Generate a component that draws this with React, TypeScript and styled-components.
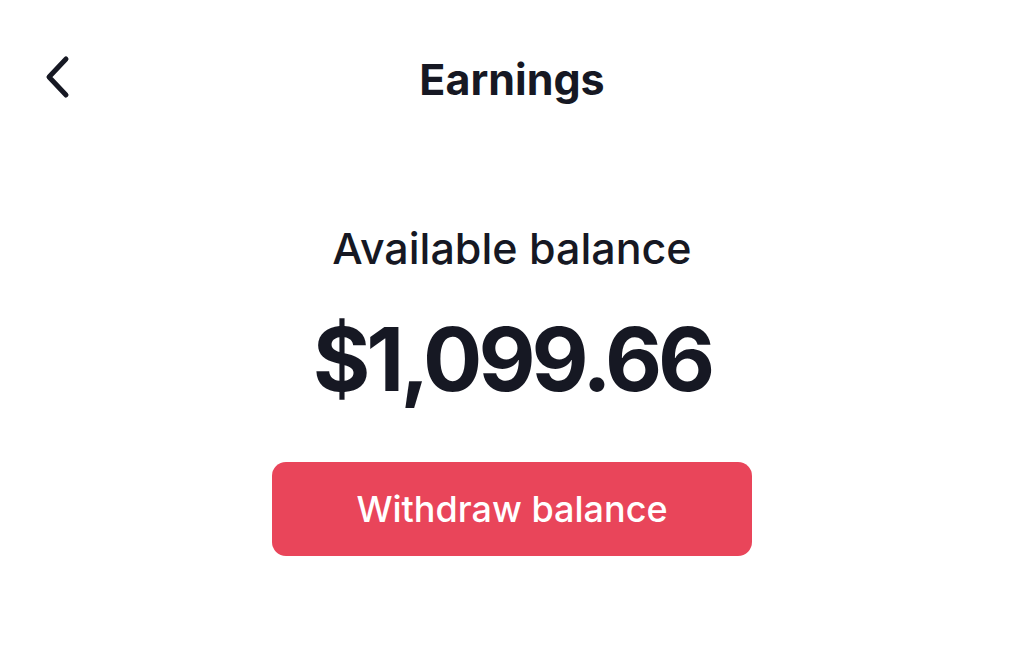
import styled, { createGlobalStyle } from "styled-components";

const GlobalStyle = createGlobalStyle`
    html, body {
        margin: 0;
        padding: 0;
        background: #FFFFFF;
    }
    body {
        font-family: "Inter", "Noto Sans", sans-serif;
        color: #161823;
    }
`

const App = () => {
    return (
        <>
            <GlobalStyle/>
            <StyledPage>
                <StyledHeader>
                    <StyledBackBtn aria-label="Back">
                        <StyledBackIcon viewBox="0 0 28 44" fill="none">
                            <path d="M22 4 L5 22 L22 40" stroke="#161823" strokeWidth="5"
                                  strokeLinecap="round" strokeLinejoin="round"/>
                        </StyledBackIcon>
                    </StyledBackBtn>
                    <StyledTitle>Earnings</StyledTitle>
                </StyledHeader>

                <StyledBalanceArea>
                    <StyledBalanceLabel>Available balance</StyledBalanceLabel>
                    <StyledBalanceAmount>$1,099.66</StyledBalanceAmount>
                    <StyledWithdrawBtn>Withdraw balance</StyledWithdrawBtn>
                </StyledBalanceArea>
            </StyledPage>
        </>
    )
}

export default App

const StyledPage = styled.div`
    width: 1024px;
    height: 664px;
    display: flex;
    flex-direction: column;
    background: #FFFFFF;
`

const StyledHeader = styled.div`
    position: relative;
    display: flex;
    align-items: center;
    justify-content: center;
    height: 82px;
    margin-top: 38px;
`

const StyledBackBtn = styled.button`
    position: absolute;
    left: 44px;
    top: 17px;
    padding: 0;
    border: none;
    background: none;
    display: block;
    line-height: 0;
`

const StyledBackIcon = styled.svg`
    display: block;
    width: 28px;
    height: 44px;
    flex-shrink: 0;
`

const StyledTitle = styled.div`
    font-size: 43px;
    font-weight: 700;
`

const StyledBalanceArea = styled.div`
    display: flex;
    flex-direction: column;
    align-items: center;
    padding-top: 100px;
`

const StyledBalanceLabel = styled.div`
    font-size: 43px;
    font-weight: 500;
    line-height: 56px;
`

const StyledBalanceAmount = styled.div`
    font-size: 88px;
    font-weight: 700;
    letter-spacing: -4px;
    line-height: 110px;
    margin-top: 28px;
`

const StyledWithdrawBtn = styled.button`
    width: 480px;
    height: 94px;
    margin-top: 48px;
    border: none;
    border-radius: 14px;
    background: #E9455A;
    color: #FFFFFF;
    font-family: "Inter", "Noto Sans", sans-serif;
    font-size: 36px;
    font-weight: 500;
`
